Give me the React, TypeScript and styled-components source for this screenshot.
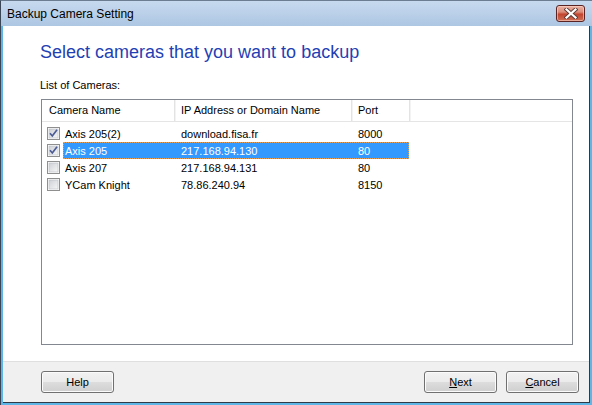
import React from "react";
import styled, { createGlobalStyle } from "styled-components";

const GlobalStyle = createGlobalStyle`
  html, body { margin: 0; padding: 0; background: #ffffff; }
  body { font-family: "Liberation Sans", Arial, sans-serif; font-size: 11px; color: #000; }
  * { box-sizing: border-box; }
`;

const Window = styled.div`
  width: 592px;
  height: 405px;
  display: flex;
  flex-direction: column;
  overflow: hidden;
`;

const TitleBar = styled.div`
  height: 26px;
  flex: none;
  display: flex;
  align-items: flex-start;
  justify-content: space-between;
  border-left: 1px solid #3a4656;
  border-top: 1px solid #6c7d92;
  background: linear-gradient(#c6d9ee 0%, #bcd1ea 45%, #adc6e2 100%);
  padding: 0 7px 0 6px;
`;

const Title = styled.div`
  font-family: "Liberation Sans", Arial, sans-serif;
  font-size: 12px;
  line-height: 14px;
  margin-top: 6px;
  color: #000;
`;

const CloseButton = styled.div`
  width: 29px;
  height: 17px;
  margin-top: 4px;
  border: 1px solid #5a2424;
  border-radius: 3px;
  background: linear-gradient(#eab1a4 0%, #dc8d7b 40%, #c2452f 55%, #cf6f58 100%);
  box-shadow: inset 0 0 0 1px rgba(255, 220, 210, 0.55);
  display: flex;
  align-items: center;
  justify-content: center;
`;

const Body = styled.div`
  flex: 1;
  display: flex;
  border-left: 1px solid #3a4656;
  background: #5eb6e6;
  padding: 0 2px 2px 2px;
`;

const Inner = styled.div`
  flex: 1;
  display: flex;
  flex-direction: column;
  background: #ffffff;
  border-right: 1px solid #2e3a48;
  border-bottom: 1px solid #2e3a48;
`;

const Content = styled.div`
  flex: 1;
  padding: 15px 0 0 37px;
  display: flex;
  flex-direction: column;
`;

const Heading = styled.div`
  font-family: "Liberation Sans", Arial, sans-serif;
  font-size: 18px;
  line-height: 22px;
  color: #1f3fb4;
`;

const Label = styled.div`
  margin-top: 15px;
  line-height: 14px;
`;

const ListBox = styled.div`
  margin-top: 7px;
  margin-left: 1px;
  width: 532px;
  height: 246px;
  border: 1px solid #828790;
  background: #fff;
  display: flex;
  flex-direction: column;
`;

const Header = styled.div`
  height: 22px;
  display: grid;
  grid-template-columns: 133px 177px 58px 1fr;
  border-bottom: 1px solid #e5e5e5;
`;

const HeaderCell = styled.div<{ $pad: number; $last?: boolean }>`
  display: flex;
  align-items: center;
  padding-left: ${(p) => p.$pad}px;
  border-right: ${(p) => (p.$last ? "none" : "1px solid #e3e3e3")};
  box-shadow: ${(p) => (p.$last ? "none" : "1px 0 0 #f3f3f3")};
  line-height: 14px;
  padding-bottom: 1px;
`;

const Rows = styled.div`
  padding-top: 3px;
  display: flex;
  flex-direction: column;
`;

const Row = styled.div`
  height: 17px;
  display: flex;
  align-items: center;
  padding-left: 5px;
`;

const CheckWrap = styled.div`
  width: 13px;
  height: 13px;
  margin-right: 3px;
  display: flex;
`;

const Selection = styled.div<{ $selected?: boolean }>`
  width: 346px;
  height: 17px;
  display: grid;
  grid-template-columns: 117px 177px 1fr;
  align-items: center;
  border: 1px dotted ${(p) => (p.$selected ? "#e2a05a" : "transparent")};
  background: ${(p) => (p.$selected ? "#3399ff" : "transparent")};
  color: ${(p) => (p.$selected ? "#ffffff" : "#000000")};
  line-height: 14px;
`;

const Cell = styled.div<{ $pad?: number }>`
  padding-left: ${(p) => p.$pad ?? 0}px;
  white-space: nowrap;
`;

const Footer = styled.div`
  height: 41px;
  flex: none;
  border-top: 1px solid #dfdfdf;
  background: #f0f0f0;
  display: flex;
  align-items: center;
  padding: 0 10px 0 38px;
`;

const Spacer = styled.div`
  flex: 1;
`;

const Button = styled.div<{ $gap?: number }>`
  width: 73px;
  height: 22px;
  margin-left: ${(p) => p.$gap ?? 0}px;
  border: 1px solid #707070;
  border-radius: 3px;
  background: linear-gradient(#f2f2f2 0%, #ebebeb 50%, #dddddd 50%, #cfcfcf 100%);
  box-shadow: inset 0 0 0 1px #fbfbfb;
  display: flex;
  align-items: center;
  justify-content: center;
  line-height: 14px;
  color: #000;
`;

const CheckBox: React.FC<{ checked: boolean }> = ({ checked }) => (
  <CheckWrap>
    <svg width="13" height="13" viewBox="0 0 13 13">
      <defs>
        <linearGradient id="cbg" x1="0" y1="0" x2="1" y2="1">
          <stop offset="0" stopColor="#cdd0d5" />
          <stop offset="1" stopColor="#f7f7f7" />
        </linearGradient>
      </defs>
      <rect x="0.5" y="0.5" width="12" height="12" fill="#fff" stroke="#8f8f8f" />
      <rect x="2" y="2" width="9" height="9" fill="url(#cbg)" stroke="#b8bcc2" strokeWidth="0.6" />
      {checked && (
        <path d="M3 6.3 L5.3 9 L10 2.8" fill="none" stroke="#4b5b96" strokeWidth="1.7" strokeLinejoin="miter" />
      )}
    </svg>
  </CheckWrap>
);

const cameras = [
  { name: "Axis 205(2)", ip: "download.fisa.fr", port: "8000", checked: true, selected: false },
  { name: "Axis 205", ip: "217.168.94.130", port: "80", checked: true, selected: true },
  { name: "Axis 207", ip: "217.168.94.131", port: "80", checked: false, selected: false },
  { name: "YCam Knight", ip: "78.86.240.94", port: "8150", checked: false, selected: false },
];

export default function App() {
  return (
    <>
      <GlobalStyle />
      <Window>
        <TitleBar>
          <Title>Backup Camera Setting</Title>
          <CloseButton>
            <svg width="14" height="11" viewBox="0 0 14 11">
              <path d="M2.5 1.5 L11.5 9.5 M11.5 1.5 L2.5 9.5" stroke="#5b3a36" strokeWidth="4" strokeLinecap="square" />
              <path d="M2.5 1.5 L11.5 9.5 M11.5 1.5 L2.5 9.5" stroke="#ffffff" strokeWidth="2.2" strokeLinecap="square" />
            </svg>
          </CloseButton>
        </TitleBar>
        <Body>
          <Inner>
            <Content>
              <Heading>Select cameras that you want to backup</Heading>
              <Label>List of Cameras:</Label>
              <ListBox>
                <Header>
                  <HeaderCell $pad={7}>Camera Name</HeaderCell>
                  <HeaderCell $pad={6}>IP Address or Domain Name</HeaderCell>
                  <HeaderCell $pad={6}>Port</HeaderCell>
                  <HeaderCell $pad={0} $last />
                </Header>
                <Rows>
                  {cameras.map((c) => (
                    <Row key={c.name}>
                      <CheckBox checked={c.checked} />
                      <Selection $selected={c.selected}>
                        <Cell $pad={1}>{c.name}</Cell>
                        <Cell>{c.ip}</Cell>
                        <Cell>{c.port}</Cell>
                      </Selection>
                    </Row>
                  ))}
                </Rows>
              </ListBox>
            </Content>
            <Footer>
              <Button>Help</Button>
              <Spacer />
              <Button>
                <span>
                  <u>N</u>ext
                </span>
              </Button>
              <Button $gap={9}>
                <span>
                  <u>C</u>ancel
                </span>
              </Button>
            </Footer>
          </Inner>
        </Body>
      </Window>
    </>
  );
}
